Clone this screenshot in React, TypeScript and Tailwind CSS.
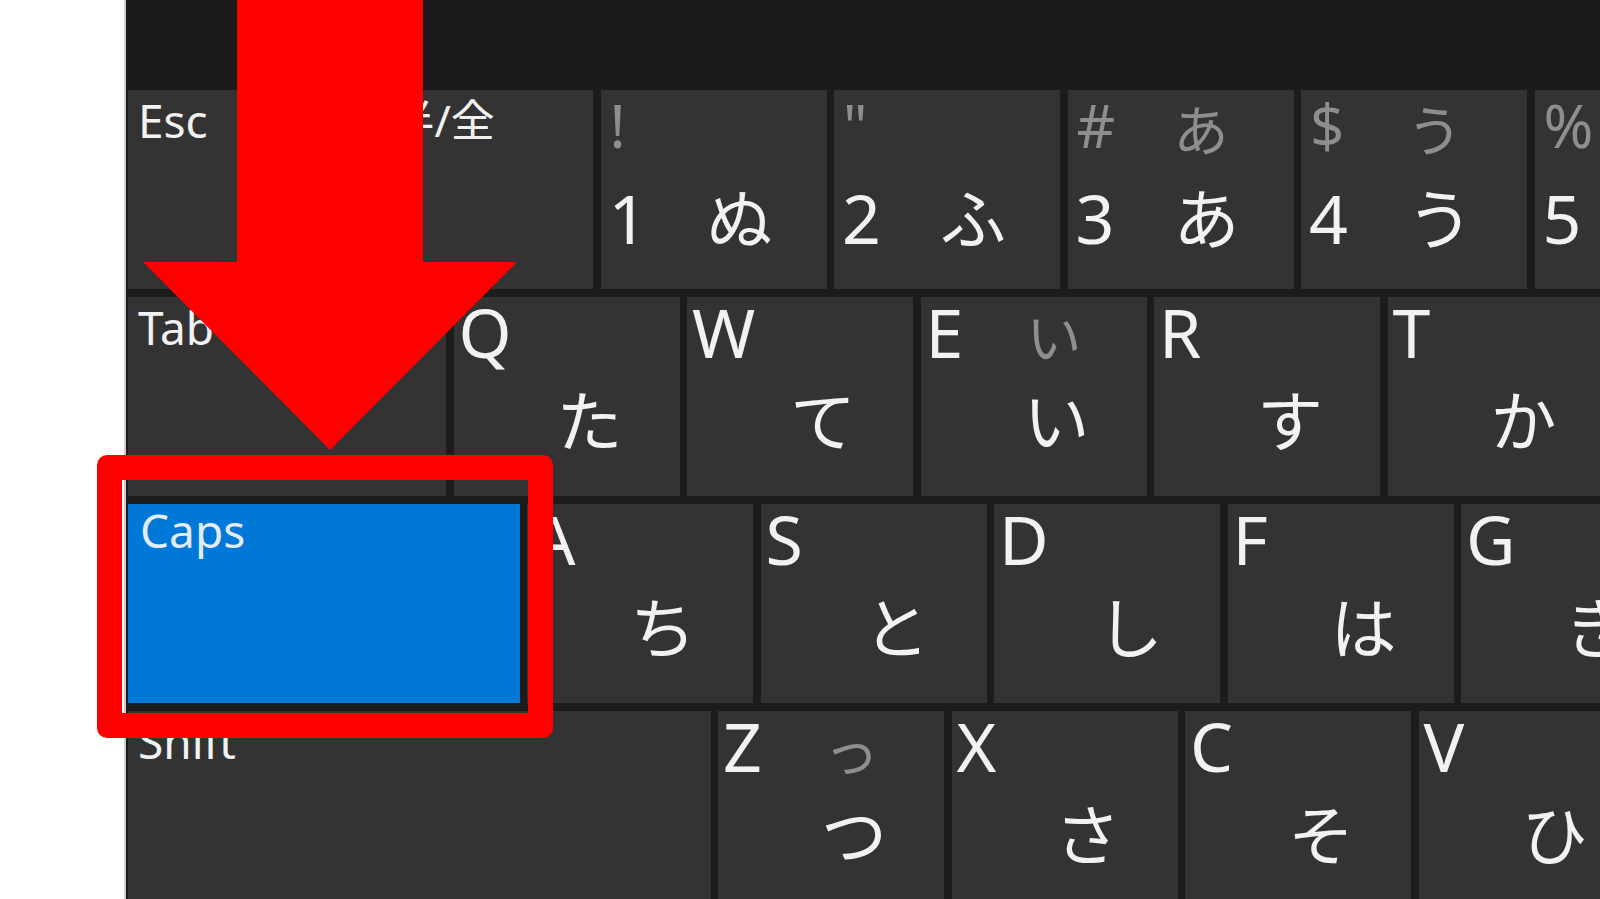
import React from "react";

type CharKeyProps = {
  w: string;
  tl: string;
  tlGrey?: boolean;
  tr?: string;
  bl?: string;
  br?: string;
};

function CharKey({ w, tl, tlGrey, tr, bl, br }: CharKeyProps) {
  const letterKey = !tlGrey;
  return (
    <div className={`shrink-0 h-[199px] bg-[#333333] ${w}`}>
      <div className="grid h-full grid-cols-[101px_1fr] grid-rows-[93px_1fr] pl-[5px] pt-[1px]">
        <div>
          {tlGrey ? (
            <span className="block mt-[4px] ml-[4px] text-[60px] leading-none text-[#8e8e8e]">{tl}</span>
          ) : (
            <span className="block text-[68px] leading-none text-[#f2f2f2]">{tl}</span>
          )}
        </div>
        <div>
          {tr && <span className="block mt-[11px] text-[55px] leading-none text-[#8e8e8e]">{tr}</span>}
        </div>
        <div>
          {bl && <span className="block ml-[3px] text-[68px] leading-none text-[#f2f2f2]">{bl}</span>}
        </div>
        <div>
          {br && (
            <span
              className={
                letterKey
                  ? "block -mt-[4px] -ml-[3px] text-[66px] leading-none text-[#f2f2f2]"
                  : "block mt-[1px] text-[66px] leading-none text-[#f2f2f2]"
              }
            >
              {br}
            </span>
          )}
        </div>
      </div>
    </div>
  );
}

function FnKey({ w, label, pad = "pl-[10px]" }: { w: string; label: string; pad?: string }) {
  return (
    <div className={`shrink-0 h-[199px] bg-[#333333] pt-[7px] ${pad} ${w}`}>
      <span className="block text-[46px] leading-none text-[#f2f2f2]">{label}</span>
    </div>
  );
}

export default function App() {
  return (
    <div className="relative w-[1600px] h-[899px] overflow-hidden bg-white font-['Noto_Sans','Noto_Sans_CJK_JP',sans-serif]">
      <div className="flex h-full">
        <div className="w-[124px] shrink-0 bg-white" />
        <div className="flex-1 overflow-hidden border-l-[2px] border-[#cfcfcf] bg-[#1c1c1c]">
          <div className="h-[90px] bg-[#1b1b1b]" />
          <div className="flex flex-col gap-[8px] pl-[2px]">
            <div className="flex gap-[7.5px]">
              <FnKey w="w-[252px]" label="Esc" />
              <div className="shrink-0 w-[205.5px] h-[199px] bg-[#333333] pt-[8px] pl-[3px]">
                <span className="block text-[44px] leading-none text-[#f2f2f2]">半/全</span>
              </div>
              <CharKey w="w-[226px]" tl="!" tlGrey bl="1" br="ぬ" />
              <CharKey w="w-[226px]" tl={'"'} tlGrey bl="2" br="ふ" />
              <CharKey w="w-[226px]" tl="#" tlGrey tr="あ" bl="3" br="あ" />
              <CharKey w="w-[226px]" tl="$" tlGrey tr="う" bl="4" br="う" />
              <CharKey w="w-[226px]" tl="%" tlGrey tr="え" bl="5" br="え" />
            </div>
            <div className="flex gap-[7.5px]">
              <FnKey w="w-[318px]" label="Tab" />
              <CharKey w="w-[226px]" tl="Q" br="た" />
              <CharKey w="w-[226px]" tl="W" br="て" />
              <CharKey w="w-[226px]" tl="E" tr="い" br="い" />
              <CharKey w="w-[226px]" tl="R" br="す" />
              <CharKey w="w-[226px]" tl="T" br="か" />
            </div>
            <div className="flex gap-[7.5px]">
              <div className="shrink-0 w-[391.5px] h-[199px] bg-[#0078d7] pl-[12px] pt-[3px]">
                <span className="block text-[46px] leading-none text-[#e3ecf7]">Caps</span>
              </div>
              <CharKey w="w-[226px]" tl="A" br="ち" />
              <CharKey w="w-[226px]" tl="S" br="と" />
              <CharKey w="w-[226px]" tl="D" br="し" />
              <CharKey w="w-[226px]" tl="F" br="は" />
              <CharKey w="w-[226px]" tl="G" br="き" />
            </div>
            <div className="flex gap-[7.5px]">
              <FnKey w="w-[582.5px]" label="Shift" />
              <CharKey w="w-[226px]" tl="Z" tr="っ" br="つ" />
              <CharKey w="w-[226px]" tl="X" br="さ" />
              <CharKey w="w-[226px]" tl="C" br="そ" />
              <CharKey w="w-[226px]" tl="V" br="ひ" />
            </div>
          </div>
        </div>
      </div>

      <svg
        className="pointer-events-none absolute left-0 top-0"
        width="1600"
        height="899"
        viewBox="0 0 1600 899"
      >
        <polygon points="237,0 423,0 423,262 517,262 330,450 143,262 237,262" fill="#ff0000" />
      </svg>
      <div className="pointer-events-none absolute left-[97px] top-[455px] w-[456px] h-[283px] rounded-[10px] border-[25px] border-[#ff0000]" />
    </div>
  );
}
